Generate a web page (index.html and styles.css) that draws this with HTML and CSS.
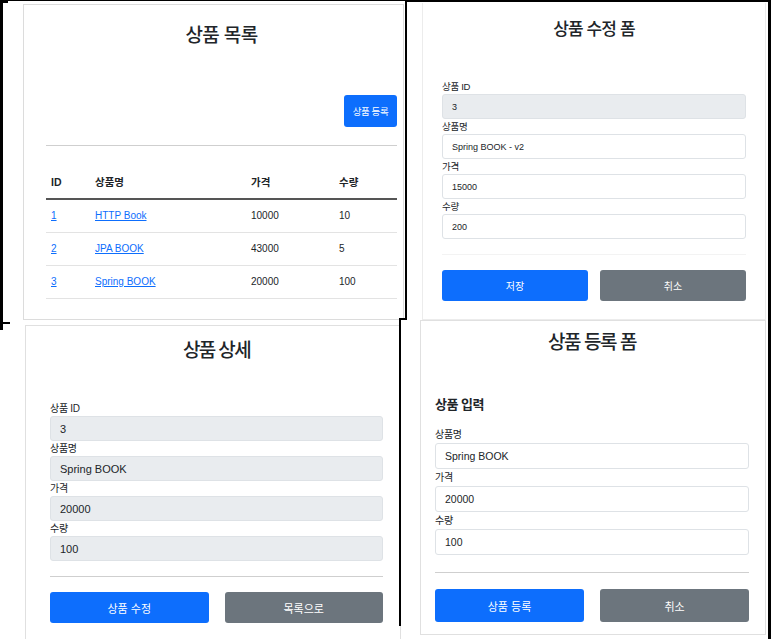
FILE: index.html
```html
<!DOCTYPE html>
<html lang="ko">
<head>
  <meta charset="UTF-8">
  <title>상품 관리 화면 모음</title>
  <link rel="stylesheet" href="styles.css">
</head>
<body>
  <div class="collage">

    <!-- 상품 목록 -->
    <section class="shot shot-list">
      <h2 class="title">상품 목록</h2>
      <div class="actions">
        <button class="btn btn-primary btn-small">상품 등록</button>
      </div>
      <hr class="divider">
      <table class="items">
        <thead>
          <tr><th class="col-id">ID</th><th class="col-name">상품명</th><th class="col-price">가격</th><th>수량</th></tr>
        </thead>
        <tbody>
          <tr><td><a href="#">1</a></td><td><a href="#">HTTP Book</a></td><td>10000</td><td>10</td></tr>
          <tr><td><a href="#">2</a></td><td><a href="#">JPA BOOK</a></td><td>43000</td><td>5</td></tr>
          <tr><td><a href="#">3</a></td><td><a href="#">Spring BOOK</a></td><td>20000</td><td>100</td></tr>
        </tbody>
      </table>
    </section>

    <!-- 상품 수정 폼 -->
    <section class="shot shot-edit">
      <h2 class="title">상품 수정 폼</h2>
      <form class="form">
        <div class="field"><label>상품 ID</label><input class="readonly" value="3" readonly></div>
        <div class="field"><label>상품명</label><input value="Spring BOOK - v2"></div>
        <div class="field"><label>가격</label><input value="15000"></div>
        <div class="field"><label>수량</label><input value="200"></div>
      </form>
      <hr class="divider faint">
      <div class="buttons">
        <button class="btn btn-primary">저장</button>
        <button class="btn btn-secondary">취소</button>
      </div>
    </section>

    <!-- 상품 상세 -->
    <section class="shot shot-detail">
      <h2 class="title">상품 상세</h2>
      <div class="form">
        <div class="field"><label>상품 ID</label><input class="readonly" value="3" readonly></div>
        <div class="field"><label>상품명</label><input class="readonly" value="Spring BOOK" readonly></div>
        <div class="field"><label>가격</label><input class="readonly" value="20000" readonly></div>
        <div class="field"><label>수량</label><input class="readonly" value="100" readonly></div>
      </div>
      <hr class="divider">
      <div class="buttons">
        <button class="btn btn-primary">상품 수정</button>
        <button class="btn btn-secondary">목록으로</button>
      </div>
    </section>

    <!-- 상품 등록 폼 -->
    <section class="shot shot-add">
      <h2 class="title">상품 등록 폼</h2>
      <h4 class="subtitle">상품 입력</h4>
      <form class="form">
        <div class="field"><label>상품명</label><input value="Spring BOOK"></div>
        <div class="field"><label>가격</label><input value="20000"></div>
        <div class="field"><label>수량</label><input value="100"></div>
      </form>
      <hr class="divider">
      <div class="buttons">
        <button class="btn btn-primary">상품 등록</button>
        <button class="btn btn-secondary">취소</button>
      </div>
    </section>

    <!-- 캡처 테두리 -->
    <div class="edge edge-left"></div>
    <div class="edge edge-left-tick"></div>
    <div class="edge edge-top-tick"></div>
    <div class="edge edge-top-thin"></div>
    <div class="edge edge-top"></div>
    <div class="edge edge-mid-top"></div>
    <div class="edge edge-mid-join"></div>
    <div class="edge edge-mid-bottom"></div>
    <div class="edge edge-right"></div>
  </div>
</body>
</html>
```

FILE: styles.css
```css
/* Global */
body {
  margin: 0;
  background-color: #ffffff;
  color: #212529;
  font-family: "Liberation Sans", "Noto Sans CJK KR", sans-serif;
}

.collage {
  position: relative;
  width: 771px;
  height: 639px;
  overflow: hidden;
  display: grid;
  grid-template-columns: 400px 371px;
  grid-template-rows: 320px 319px;
}

/* Screenshot cards */
.shot {
  box-sizing: border-box;
  border: 1px solid #e2e2e2;
  background-color: #ffffff;
}

.title {
  margin: 0;
  text-align: center;
  font-weight: 500;
  color: #212529;
}

.divider {
  margin: 0;
  border: none;
  border-top: 1px solid #cfcfcf;
}

.divider.faint {
  border-top-color: #f3f3f3;
}

/* Buttons */
.btn {
  box-sizing: border-box;
  border: none;
  border-radius: 3px;
  color: #ffffff;
  font-family: "Liberation Sans", "Noto Sans CJK KR", sans-serif;
  padding: 0;
  cursor: pointer;
}

.btn-primary {
  background-color: #0d6efd;
}

.btn-secondary {
  background-color: #6c757d;
}

.buttons {
  display: grid;
  grid-template-columns: 1fr 1fr;
}

/* Form fields */
.form {
  display: flex;
  flex-direction: column;
}

.field label {
  display: block;
  font-size: 9.5px;
  letter-spacing: -0.3px;
}

.field input {
  display: block;
  box-sizing: border-box;
  width: 100%;
  margin: 0;
  border: 1px solid #dee2e6;
  border-radius: 3px;
  background-color: #ffffff;
  color: #212529;
  font-family: "Liberation Sans", "Noto Sans CJK KR", sans-serif;
  outline: none;
}

.field input.readonly {
  background-color: #e9ecef;
}

/* 상품 목록 */
.shot-list {
  margin: 4px 0 0 23px;
  width: 381px;
  height: 316px;
  padding: 0 6px 0 22px;
  border-color: #dcdcdc;
}

.shot-list .title {
  margin-top: 17px;
  font-size: 19px;
  line-height: 28px;
  letter-spacing: -0.6px;
}

.actions {
  display: flex;
  justify-content: flex-end;
  margin-top: 45px;
}

.btn-small {
  width: 53px;
  height: 32px;
  font-size: 9.5px;
  letter-spacing: -0.4px;
}

.shot-list .divider {
  margin-top: 18px;
}

.items {
  width: 100%;
  margin-top: 19px;
  border-collapse: separate;
  border-spacing: 0;
  font-size: 10px;
}

.items th {
  text-align: left;
  font-weight: 700;
  font-size: 10.5px;
  line-height: 32px;
  padding: 1px 5px 0;
  border-bottom: 2px solid #555;
}

.items td {
  line-height: 32px;
  padding: 0 5px;
  border-bottom: 1px solid #e3e3e3;
}

.items .col-id {
  width: 34px;
}

.items .col-name {
  width: 146px;
}

.items .col-price {
  width: 78px;
}

.items a {
  color: #0d6efd;
  text-decoration: underline;
}

/* 상품 수정 폼 */
.shot-edit {
  margin: 3px 0 0 22px;
  width: 344px;
  height: 317px;
  padding: 0 19px;
  border-color: #ececec;
  border-top: none;
}

.shot-edit .title {
  margin-top: 15px;
  font-size: 17px;
  line-height: 24px;
  letter-spacing: -0.9px;
}

.shot-edit .form {
  margin-top: 37px;
}

.shot-edit .field label {
  line-height: 15px;
}

.shot-edit .field input {
  height: 25px;
  padding: 0 9px;
  font-size: 9px;
}

.shot-edit .divider {
  margin-top: 15px;
}

.shot-edit .buttons {
  margin-top: 15px;
  column-gap: 12px;
}

.shot-edit .btn {
  height: 31px;
  font-size: 10px;
}

/* 상품 상세 */
.shot-detail {
  margin: 5px 0 0 25px;
  width: 376px;
  height: 314px;
  padding: 0 17px 0 24px;
  border-color: #e0e0e0;
  border-bottom: none;
}

.shot-detail .title {
  margin-top: 12px;
  font-size: 19px;
  line-height: 26px;
  letter-spacing: -1.6px;
}

.shot-detail .form {
  margin-top: 37px;
}

.shot-detail .field label {
  line-height: 15px;
  font-size: 10px;
}

.shot-detail .field input {
  height: 25px;
  padding: 0 9px;
  font-size: 11px;
}

.shot-detail .divider {
  margin-top: 15px;
}

.shot-detail .buttons {
  margin-top: 15px;
  column-gap: 16px;
}

.shot-detail .btn {
  height: 31px;
  font-size: 11px;
}

/* 상품 등록 폼 */
.shot-add {
  margin: 0 0 0 20px;
  width: 346px;
  height: 315px;
  padding: 0 16px 0 14px;
  border-color: #e0e0e0;
}

.shot-add .title {
  margin-top: 9px;
  font-size: 19px;
  line-height: 26px;
  letter-spacing: -1.4px;
}

.subtitle {
  margin: 39px 0 0;
  font-size: 13px;
  line-height: 20px;
  font-weight: 700;
  letter-spacing: -0.5px;
}

.shot-add .form {
  margin-top: 11px;
}

.shot-add .field label {
  line-height: 17px;
  font-size: 10px;
}

.shot-add .field input {
  height: 26px;
  padding: 0 9px;
  font-size: 10.5px;
}

.shot-add .divider {
  margin-top: 17px;
}

.shot-add .buttons {
  margin-top: 16px;
  column-gap: 16px;
}

.shot-add .btn {
  height: 33px;
  font-size: 11px;
}

/* Black capture edges laid over the collage */
.edge {
  position: absolute;
  background-color: #000000;
}

.edge-left {
  left: 0;
  top: 0;
  width: 3px;
  height: 330px;
}

.edge-left-tick {
  left: 0;
  top: 322px;
  width: 10px;
  height: 2px;
}

.edge-top-tick {
  left: 0;
  top: 0;
  width: 8px;
  height: 3px;
}

.edge-top-thin {
  left: 8px;
  top: 0;
  width: 397px;
  height: 1px;
}

.edge-top {
  left: 405px;
  top: 0;
  width: 366px;
  height: 2px;
}

.edge-mid-top {
  left: 405px;
  top: 0;
  width: 2px;
  height: 320px;
}

.edge-mid-join {
  left: 399px;
  top: 318px;
  width: 8px;
  height: 2px;
}

.edge-mid-bottom {
  left: 399px;
  top: 318px;
  width: 2px;
  height: 308px;
}

.edge-right {
  left: 768px;
  top: 0;
  width: 3px;
  height: 639px;
}
```
